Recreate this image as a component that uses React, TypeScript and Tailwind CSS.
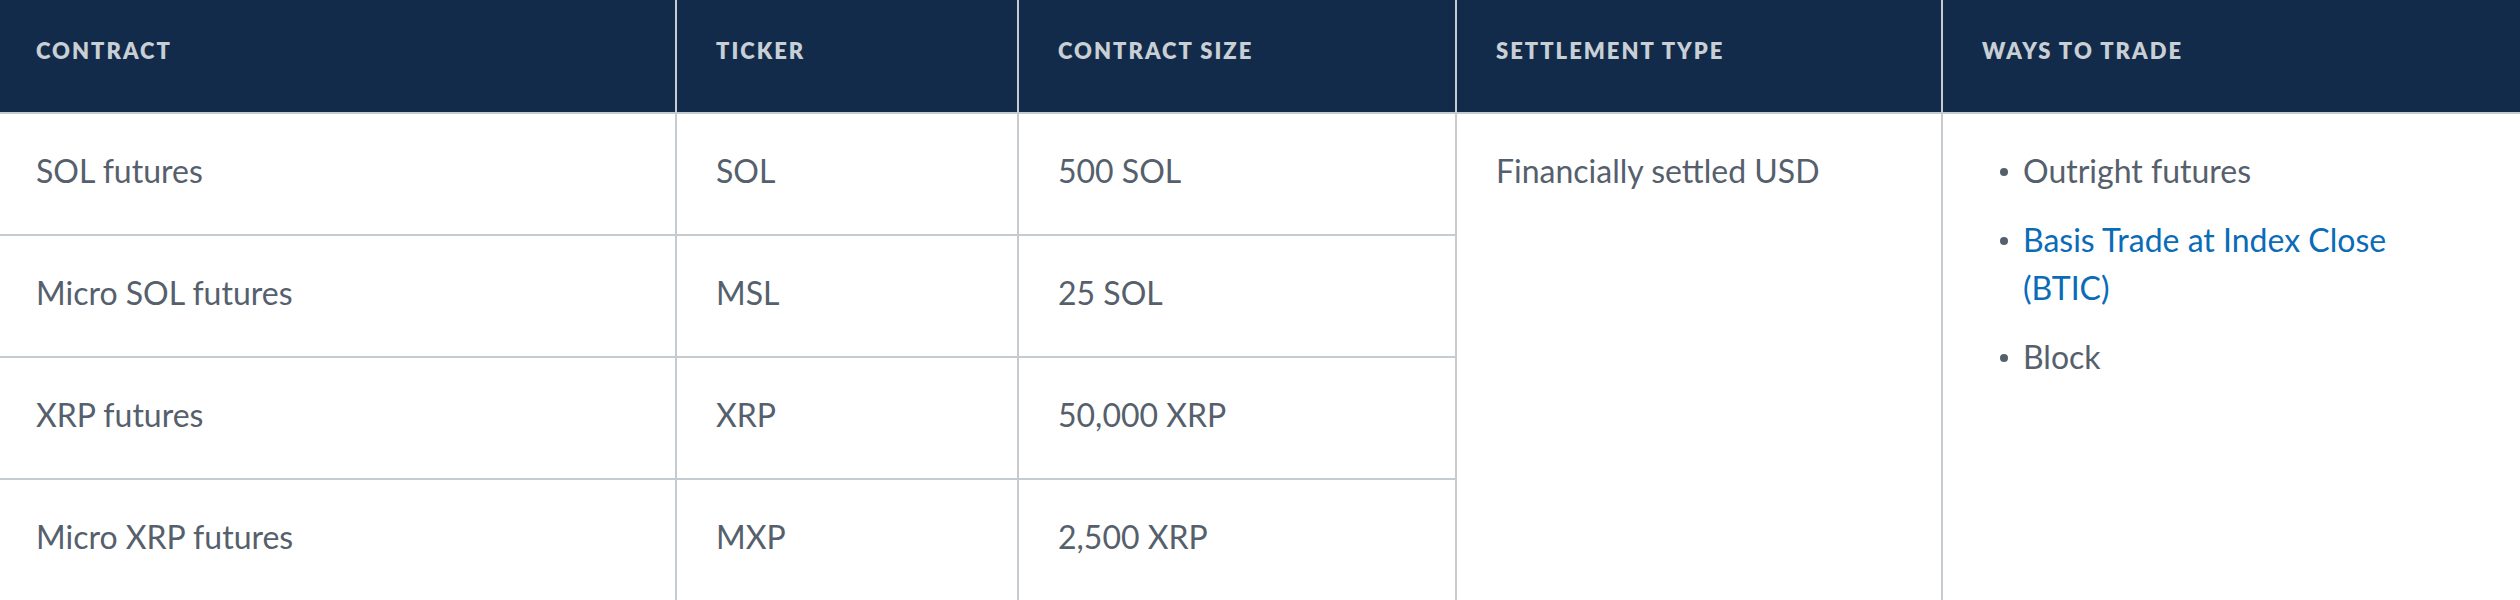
import React from "react";

const rows = [
  { contract: "SOL futures", ticker: "SOL", size: "500 SOL" },
  { contract: "Micro SOL futures", ticker: "MSL", size: "25 SOL" },
  { contract: "XRP futures", ticker: "XRP", size: "50,000 XRP" },
  { contract: "Micro XRP futures", ticker: "MXP", size: "2,500 XRP" },
];

const th =
  "bg-[#132b4b] text-[#c8cfd5] text-[22px] leading-[30px] font-extrabold uppercase tracking-[2px] text-left align-top pt-[36px] pb-[46px] border-b-2 border-[#c5ccd1]";
const td =
  "text-[32px] leading-[48px] text-[#55606c] font-normal align-top pt-[33px] pb-[39px]";

export default function App() {
  return (
    <div className="w-[2520px] h-[600px] overflow-hidden bg-white" style={{ fontFamily: "Lato, 'Open Sans', sans-serif" }}>
      <table className="w-[2520px] table-fixed border-separate border-spacing-0">
        <colgroup>
          <col className="w-[675px]" />
          <col className="w-[342px]" />
          <col className="w-[438px]" />
          <col className="w-[486px]" />
          <col className="w-[579px]" />
        </colgroup>
        <thead>
          <tr>
            <th className={`${th} pl-[36px]`}>Contract</th>
            <th className={`${th} pl-[39px] border-l-2`}>Ticker</th>
            <th className={`${th} pl-[39px] border-l-2`}>Contract Size</th>
            <th className={`${th} pl-[39px] border-l-2`}>Settlement Type</th>
            <th className={`${th} pl-[39px] border-l-2`}>Ways to Trade</th>
          </tr>
        </thead>
        <tbody>
          {rows.map((r, i) => (
            <tr key={r.ticker}>
              <td className={`${td} pl-[36px] border-b-2 border-[#c5ccd1]`}>{r.contract}</td>
              <td className={`${td} pl-[39px] border-l-2 border-b-2 border-[#c5ccd1]`}>{r.ticker}</td>
              <td className={`${td} pl-[39px] border-l-2 border-b-2 border-[#c5ccd1]`}>{r.size}</td>
              {i === 0 && (
                <>
                  <td rowSpan={4} className={`${td} pl-[39px] border-l-2 border-b-2 border-[#c5ccd1]`}>
                    Financially settled USD
                  </td>
                  <td rowSpan={4} className={`${td} pl-[39px] pr-[40px] border-l-2 border-b-2 border-[#c5ccd1]`}>
                    <ul className="flex flex-col gap-[21px]">
                      <li className="flex items-start">
                        <span className="mt-[21px] ml-[18px] mr-[15px] h-[8px] w-[8px] shrink-0 rounded-full bg-[#55606c]" />
                        <span>Outright futures</span>
                      </li>
                      <li className="flex items-start">
                        <span className="mt-[21px] ml-[18px] mr-[15px] h-[8px] w-[8px] shrink-0 rounded-full bg-[#55606c]" />
                        <a href="#" className="text-[#0a6bb6]">
                          Basis Trade at Index Close
                          <br />
                          (BTIC)
                        </a>
                      </li>
                      <li className="flex items-start">
                        <span className="mt-[21px] ml-[18px] mr-[15px] h-[8px] w-[8px] shrink-0 rounded-full bg-[#55606c]" />
                        <span>Block</span>
                      </li>
                    </ul>
                  </td>
                </>
              )}
            </tr>
          ))}
        </tbody>
      </table>
    </div>
  );
}
